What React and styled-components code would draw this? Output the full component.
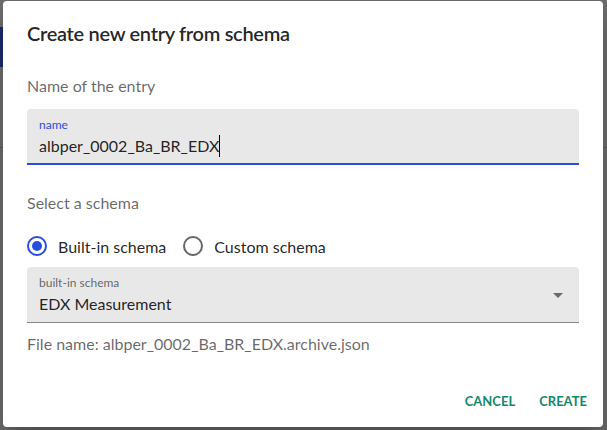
import React, { useState } from "react"
import styled, { createGlobalStyle } from "styled-components"

const GlobalStyle = createGlobalStyle`
  html, body, #root {
    margin: 0;
    height: 100%;
  }
  body {
    font-family: Lato, "Liberation Sans", sans-serif;
    background-color: #6b6b6b;
    background-image:
      linear-gradient(to bottom, transparent 147px, #5a5a5a 147px, #5a5a5a 148px, transparent 148px),
      linear-gradient(to right, #1c2a6c 3px, transparent 3px);
    background-size: 100% 100%, 100% 40px;
    background-position: 0 0, 0 27px;
    background-repeat: no-repeat;
  }
`

const Page = styled.div`
  box-sizing: border-box;
  height: 100%;
  padding: 1px 4px 3px 3px;
  display: flex;
`

const Dialog = styled.div`
  flex: 1;
  display: flex;
  flex-direction: column;
  background: #fff;
  border-radius: 4px;
  box-shadow: 0 11px 15px -7px rgba(0, 0, 0, 0.2), 0 24px 38px 3px rgba(0, 0, 0, 0.14);
  color: rgba(0, 0, 0, 0.87);
`

const Title = styled.h2`
  margin: 0;
  padding: 16px 24px;
  font-size: 20px;
  font-weight: 600;
  line-height: 32px;
  letter-spacing: -0.3px;
`

const Content = styled.div`
  flex: 1;
  padding: 0 24px;
  display: flex;
  flex-direction: column;
`

const Subtitle = styled.div`
  margin-top: ${(p) => p.$top}px;
  font-size: 16px;
  line-height: 24px;
  color: rgba(0, 0, 0, 0.6);
`

const Filled = styled.div`
  position: relative;
  box-sizing: border-box;
  height: 56px;
  margin-top: ${(p) => p.$top}px;
  padding: 7px 12px 0;
  background: rgba(0, 0, 0, 0.09);
  border-radius: 4px 4px 0 0;
  border-bottom: ${(p) => (p.$focused ? "2px solid #2a4cdf" : "1px solid rgba(0, 0, 0, 0.42)")};
  display: flex;
  flex-direction: column;
`

const SmallLabel = styled.div`
  font-size: 12px;
  line-height: 17px;
  color: ${(p) => (p.$focused ? "#2a4cdf" : "rgba(0, 0, 0, 0.6)")};
`

const Value = styled.div`
  font-size: 16px;
  line-height: 23px;
  margin-top: 1px;
  display: flex;
  align-items: center;
`

const Caret = styled.span`
  width: 1px;
  height: 22px;
  background: #000;
`

const Arrow = styled.span`
  position: absolute;
  right: 16px;
  top: 26px;
  width: 0;
  height: 0;
  border-left: 5px solid transparent;
  border-right: 5px solid transparent;
  border-top: 5px solid rgba(0, 0, 0, 0.54);
`

const RadioRow = styled.div`
  height: 42px;
  margin-top: 10px;
  display: flex;
  align-items: center;
  gap: 17px;
`

const RadioOption = styled.label`
  display: flex;
  align-items: center;
  gap: 11px;
  font-size: 16px;
  cursor: pointer;
`

const Circle = styled.span`
  box-sizing: border-box;
  width: 20px;
  height: 20px;
  border-radius: 50%;
  border: 2px solid ${(p) => (p.$checked ? "#2a4cdf" : "rgba(0, 0, 0, 0.6)")};
  display: flex;
  align-items: center;
  justify-content: center;

  &::after {
    content: "";
    width: 10px;
    height: 10px;
    border-radius: 50%;
    background: ${(p) => (p.$checked ? "#2a4cdf" : "transparent")};
  }
`

const Helper = styled.div`
  margin-top: 9px;
  font-size: 16px;
  line-height: 24px;
  color: rgba(0, 0, 0, 0.6);
`

const Actions = styled.div`
  padding: 8px;
  display: flex;
  justify-content: flex-end;
  gap: 8px;
`

const Button = styled.button`
  height: 36px;
  padding: 6px 8px;
  border: none;
  background: transparent;
  font-family: inherit;
  font-size: 13px;
  font-weight: 700;
  letter-spacing: 0;
  text-transform: uppercase;
  color: #138868;
  border-radius: 4px;
  cursor: pointer;
`

const Radio = ({ checked, label, onClick }) => (
  <RadioOption onClick={onClick}>
    <Circle $checked={checked} />
    {label}
  </RadioOption>
)

export default function App() {
  const [schema, setSchema] = useState("builtin")

  return (
    <Page>
      <GlobalStyle />
      <Dialog>
        <Title>Create new entry from schema</Title>
        <Content>
          <Subtitle $top={9}>Name of the entry</Subtitle>
          <Filled $top={11} $focused>
            <SmallLabel $focused>name</SmallLabel>
            <Value>
              albper_0002_Ba_BR_EDX
              <Caret />
            </Value>
          </Filled>
          <Subtitle $top={26}>Select a schema</Subtitle>
          <RadioRow>
            <Radio label="Built-in schema" checked={schema === "builtin"} onClick={() => setSchema("builtin")} />
            <Radio label="Custom schema" checked={schema === "custom"} onClick={() => setSchema("custom")} />
          </RadioRow>
          <Filled $top={0}>
            <SmallLabel>built-in schema</SmallLabel>
            <Value>EDX Measurement</Value>
            <Arrow />
          </Filled>
          <Helper>File name: albper_0002_Ba_BR_EDX.archive.json</Helper>
        </Content>
        <Actions>
          <Button>Cancel</Button>
          <Button>Create</Button>
        </Actions>
      </Dialog>
    </Page>
  )
}
